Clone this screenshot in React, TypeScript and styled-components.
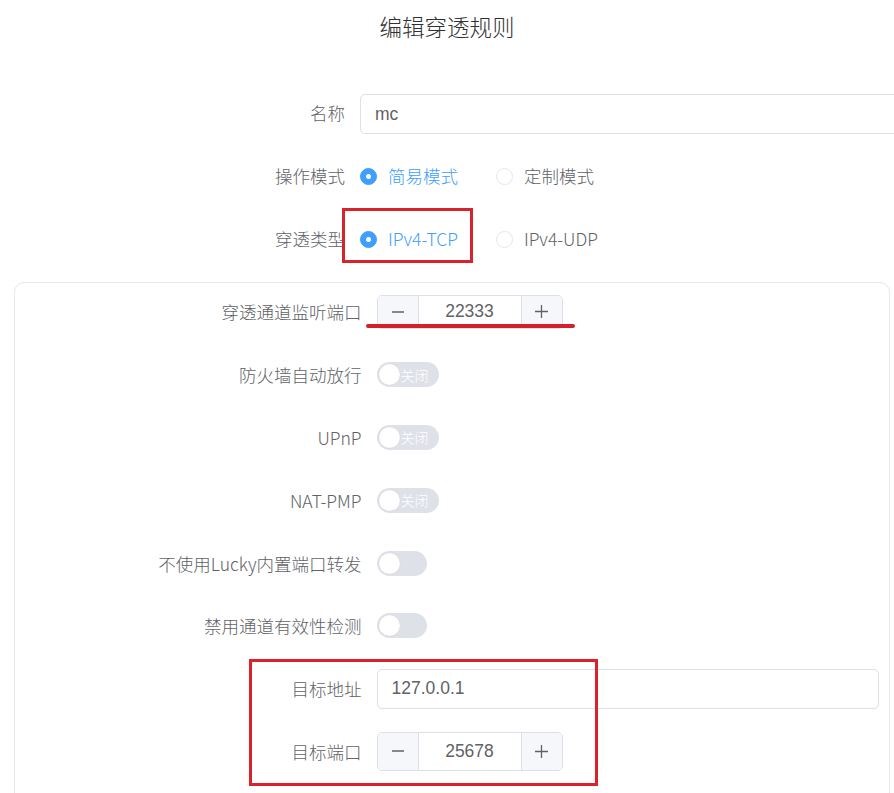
import React from 'react';
import styled, { createGlobalStyle } from 'styled-components';

const GlobalStyle = createGlobalStyle`
  html, body {
    margin: 0;
    padding: 0;
    background: #ffffff;
    overflow: hidden;
  }
  body {
    font-family: "Noto Sans CJK SC", "Microsoft YaHei", sans-serif;
    color: #606266;
  }
`;

const Page = styled.div`
  width: 894px;
  height: 793px;
  overflow: hidden;
`;

const Title = styled.div`
  height: 52px;
  line-height: 52px;
  text-align: center;
  font-size: 22.5px;
  font-weight: 300;
  color: #303133;
`;

const Form = styled.div`
  padding-top: 42px;
`;

const Row = styled.div<{ $label: number }>`
  position: relative;
  display: grid;
  grid-template-columns: ${(p) => p.$label}px 1fr;
  align-items: center;
  height: 40px;
  margin-bottom: 22.8px;
`;

const Label = styled.div<{ $lift?: number }>`
  text-align: right;
  padding-right: 15px;
  padding-bottom: ${(p) => p.$lift ?? 0}px;
  font-size: 17.5px;
  font-weight: 300;
  color: #606266;
  white-space: nowrap;
`;

const Control = styled.div`
  display: flex;
  align-items: center;
  min-width: 0;
`;

const TextInput = styled.div<{ $width: number }>`
  box-sizing: border-box;
  width: ${(p) => p.$width}px;
  flex: none;
  height: 40px;
  border: 1.3px solid #dcdfe6;
  border-radius: 5px;
  padding-left: 14px;
  display: flex;
  align-items: center;
  font-family: "Liberation Sans", "Noto Sans CJK SC", sans-serif;
  font-size: 17.5px;
  color: #606266;
`;

const RadioGroup = styled.div`
  display: flex;
  align-items: center;
  gap: 38px;
`;

const RadioItem = styled.div<{ $checked?: boolean }>`
  display: flex;
  align-items: center;
  gap: 11px;
  font-size: 17.5px;
  font-weight: 300;
  padding-bottom: 2px;
  color: ${(p) => (p.$checked ? '#409eff' : '#606266')};
`;

const RadioDot = styled.span<{ $checked?: boolean }>`
  box-sizing: border-box;
  width: 17px;
  height: 17px;
  margin-top: 2px;
  border-radius: 50%;
  border: 1.3px solid ${(p) => (p.$checked ? '#409eff' : '#e4e7ed')};
  background: ${(p) => (p.$checked ? '#409eff' : '#fff')};
  display: flex;
  align-items: center;
  justify-content: center;
  &::after {
    content: '';
    width: 5px;
    height: 5px;
    border-radius: 50%;
    background: #fff;
    display: ${(p) => (p.$checked ? 'block' : 'none')};
  }
`;

const RedBox = styled.div`
  position: absolute;
  box-sizing: border-box;
  border: 3.5px solid #d9222c;
  pointer-events: none;
`;

const RedLine = styled.div`
  position: absolute;
  height: 4px;
  border-radius: 2px;
  background: #d4202b;
`;

const Panel = styled.div`
  position: relative;
  box-sizing: border-box;
  margin-left: 14px;
  width: 876px;
  height: 520px;
  border: 1.5px solid #e4e7ed;
  border-radius: 10px;
  padding: 8.5px 10px 0 0;
`;

const NumberBox = styled.div<{ $height: number }>`
  box-sizing: border-box;
  width: 186px;
  height: ${(p) => p.$height}px;
  border: 1.3px solid #dcdfe6;
  border-radius: 5px;
  display: flex;
  align-items: stretch;
  overflow: hidden;
`;

const StepButton = styled.div<{ $side: 'left' | 'right' }>`
  width: 40px;
  flex: none;
  background: #f5f7fa;
  display: flex;
  align-items: center;
  justify-content: center;
  ${(p) =>
    p.$side === 'left'
      ? 'border-right: 1.3px solid #dcdfe6;'
      : 'border-left: 1.3px solid #dcdfe6;'}
  svg {
    display: block;
  }
`;

const NumberValue = styled.div`
  flex: 1;
  display: flex;
  align-items: center;
  justify-content: center;
  font-family: "Liberation Sans", sans-serif;
  font-size: 17.5px;
  color: #606266;
`;

const SwitchTrack = styled.div<{ $width: number }>`
  position: relative;
  box-sizing: border-box;
  width: ${(p) => p.$width}px;
  height: 25px;
  border-radius: 12.5px;
  background: #dfe1e8;
  display: flex;
  align-items: center;
`;

const SwitchKnob = styled.span`
  position: absolute;
  left: 2px;
  top: 2px;
  width: 21px;
  height: 21px;
  border-radius: 50%;
  background: #fff;
  box-shadow: 0 0 1px rgba(0, 0, 0, 0.15);
`;

const SwitchText = styled.span`
  margin-left: 24px;
  font-size: 14px;
  font-weight: 300;
  color: #fff;
`;

const Minus = () => (
  <svg width="14" height="14" viewBox="0 0 14 14">
    <path d="M1 7h12" stroke="#606266" strokeWidth="1.3" />
  </svg>
);

const Plus = () => (
  <svg width="15" height="15" viewBox="0 0 15 15">
    <path d="M1 7.5h13M7.5 1v13" stroke="#606266" strokeWidth="1.3" />
  </svg>
);

function NumberInput({ value, height }: { value: number; height: number }) {
  return (
    <NumberBox $height={height}>
      <StepButton $side="left">
        <Minus />
      </StepButton>
      <NumberValue>{value}</NumberValue>
      <StepButton $side="right">
        <Plus />
      </StepButton>
    </NumberBox>
  );
}

function Switch({ text }: { text?: string }) {
  return (
    <SwitchTrack $width={text ? 62 : 50}>
      <SwitchKnob />
      {text && <SwitchText>{text}</SwitchText>}
    </SwitchTrack>
  );
}

const switches = [
  { label: '防火墙自动放行', text: '关闭' },
  { label: 'UPnP', text: '关闭' },
  { label: 'NAT-PMP', text: '关闭' },
  { label: '不使用Lucky内置端口转发' },
  { label: '禁用通道有效性检测' },
];

export default function App() {
  return (
    <Page>
      <GlobalStyle />
      <Title>编辑穿透规则</Title>
      <Form>
        <Row $label={360}>
          <Label $lift={3}>名称</Label>
          <Control>
            <TextInput $width={560}>mc</TextInput>
          </Control>
        </Row>
        <Row $label={360}>
          <Label $lift={3}>操作模式</Label>
          <Control>
            <RadioGroup>
              <RadioItem $checked>
                <RadioDot $checked />
                简易模式
              </RadioItem>
              <RadioItem>
                <RadioDot />
                定制模式
              </RadioItem>
            </RadioGroup>
          </Control>
        </Row>
        <Row $label={360}>
          <Label $lift={2}>穿透类型</Label>
          <Control>
            <RadioGroup>
              <RadioItem $checked>
                <RadioDot $checked />
                IPv4-TCP
              </RadioItem>
              <RadioItem>
                <RadioDot />
                IPv4-UDP
              </RadioItem>
            </RadioGroup>
          </Control>
          <RedBox style={{ left: 342, top: -11.5, width: 131, height: 55 }} />
        </Row>

        <Panel>
          <Row $label={361.5}>
            <Label>穿透通道监听端口</Label>
            <Control>
              <NumberInput value={22333} height={34} />
            </Control>
            <RedLine style={{ left: 351, top: 32, width: 209 }} />
          </Row>
          {switches.map((s) => (
            <Row $label={361.5} key={s.label}>
              <Label>{s.label}</Label>
              <Control>
                <Switch text={s.text} />
              </Control>
            </Row>
          ))}
          <Row $label={361.5}>
            <Label>目标地址</Label>
            <Control>
              <TextInput $width={502}>127.0.0.1</TextInput>
            </Control>
          </Row>
          <Row $label={361.5}>
            <Label>目标端口</Label>
            <Control>
              <NumberInput value={25678} height={39} />
            </Control>
          </Row>
          <RedBox style={{ left: 233.5, top: 376, width: 349, height: 127 }} />
        </Panel>
      </Form>
    </Page>
  );
}
